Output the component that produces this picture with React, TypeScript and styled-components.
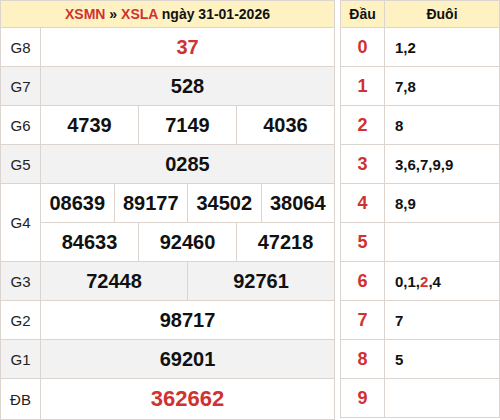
import React from "react";
import styled, { createGlobalStyle } from "styled-components";

const Global = createGlobalStyle`
  html, body { margin: 0; padding: 0; background: #fff; }
  body { font-family: "Liberation Sans", Arial, sans-serif; color: #111; }
`;

const RED = "#d03232";
const BORDER = "#dcd5cf";

const Page = styled.div`
  display: flex;
  align-items: flex-start;
  gap: 5px;
  width: 500px;
`;

const Table = styled.table<{ $w: number }>`
  width: ${(p) => p.$w}px;
  border-collapse: collapse;
  table-layout: fixed;
  font-family: "Liberation Sans", Arial, sans-serif;
`;

const HeadCell = styled.th`
  background: #fff2c2;
  border: 1px solid ${BORDER};
  height: 26px;
  padding: 0;
  font-size: 14px;
  font-weight: bold;
  color: #111;
  text-align: center;
  vertical-align: middle;
`;

const Red = styled.span`
  color: ${RED};
`;

const Row = styled.tr<{ $alt?: boolean }>`
  background: ${(p) => (p.$alt ? "#f2f2f2" : "#fff")};
`;

const Label = styled.td<{ $h?: number }>`
  border: 1px solid ${BORDER};
  height: ${(p) => p.$h ?? 38}px;
  padding: 0;
  font-size: 15px;
  text-align: center;
  vertical-align: middle;
  color: #222;
`;

const Num = styled.td<{ $red?: boolean; $size?: number; $h?: number }>`
  border: 1px solid ${BORDER};
  height: ${(p) => p.$h ?? 38}px;
  padding: 0;
  font-size: ${(p) => p.$size ?? 20}px;
  font-weight: bold;
  text-align: center;
  vertical-align: middle;
  color: ${(p) => (p.$red ? RED : "#111")};
`;

const Head = styled.td`
  border: 1px solid ${BORDER};
  height: 38px;
  padding: 0;
  font-size: 18px;
  font-weight: bold;
  text-align: center;
  vertical-align: middle;
  color: ${RED};
`;

const Tail = styled.td`
  border: 1px solid ${BORDER};
  height: 38px;
  padding: 0 0 0 10px;
  font-size: 15px;
  font-weight: bold;
  text-align: left;
  vertical-align: middle;
  color: #111;
`;

type Prize = { label: string; rows: string[][]; red?: boolean; size?: number; h?: number };

const prizes: Prize[] = [
  { label: "G8", rows: [["37"]], red: true },
  { label: "G7", rows: [["528"]] },
  { label: "G6", rows: [["4739", "7149", "4036"]] },
  { label: "G5", rows: [["0285"]] },
  { label: "G4", rows: [["08639", "89177", "34502", "38064"], ["84633", "92460", "47218"]] },
  { label: "G3", rows: [["72448", "92761"]] },
  { label: "G2", rows: [["98717"]] },
  { label: "G1", rows: [["69201"]] },
  { label: "ĐB", rows: [["362662"]], red: true, size: 22, h: 40 },
];

const loto: { d: string; t: React.ReactNode }[] = [
  { d: "0", t: "1,2" },
  { d: "1", t: "7,8" },
  { d: "2", t: "8" },
  { d: "3", t: "3,6,7,9,9" },
  { d: "4", t: "8,9" },
  { d: "5", t: "" },
  { d: "6", t: <>0,1,<Red>2</Red>,4</> },
  { d: "7", t: "7" },
  { d: "8", t: "5" },
  { d: "9", t: "" },
];

export default function App() {
  return (
    <>
      <Global />
      <Page>
        <Table $w={335}>
          <colgroup>
            <col style={{ width: 40 }} />
            {Array.from({ length: 12 }).map((_, i) => (
              <col key={i} />
            ))}
          </colgroup>
          <thead>
            <tr>
              <HeadCell colSpan={13}>
                <Red>XSMN</Red> » <Red>XSLA</Red> ngày 31-01-2026
              </HeadCell>
            </tr>
          </thead>
          <tbody>
            {prizes.map((p, pi) =>
              p.rows.map((r, ri) => (
                <Row key={p.label + ri} $alt={pi % 2 === 1}>
                  {ri === 0 && (
                    <Label rowSpan={p.rows.length} $h={p.h}>
                      {p.label}
                    </Label>
                  )}
                  {r.map((n) => (
                    <Num key={n} colSpan={12 / r.length} $red={p.red} $size={p.size} $h={p.h}>
                      {n}
                    </Num>
                  ))}
                </Row>
              ))
            )}
          </tbody>
        </Table>
        <Table $w={160}>
          <colgroup>
            <col style={{ width: 44 }} />
            <col />
          </colgroup>
          <thead>
            <tr>
              <HeadCell>Đầu</HeadCell>
              <HeadCell>Đuôi</HeadCell>
            </tr>
          </thead>
          <tbody>
            {loto.map((l) => (
              <Row key={l.d}>
                <Head>{l.d}</Head>
                <Tail>{l.t}</Tail>
              </Row>
            ))}
          </tbody>
        </Table>
      </Page>
    </>
  );
}
